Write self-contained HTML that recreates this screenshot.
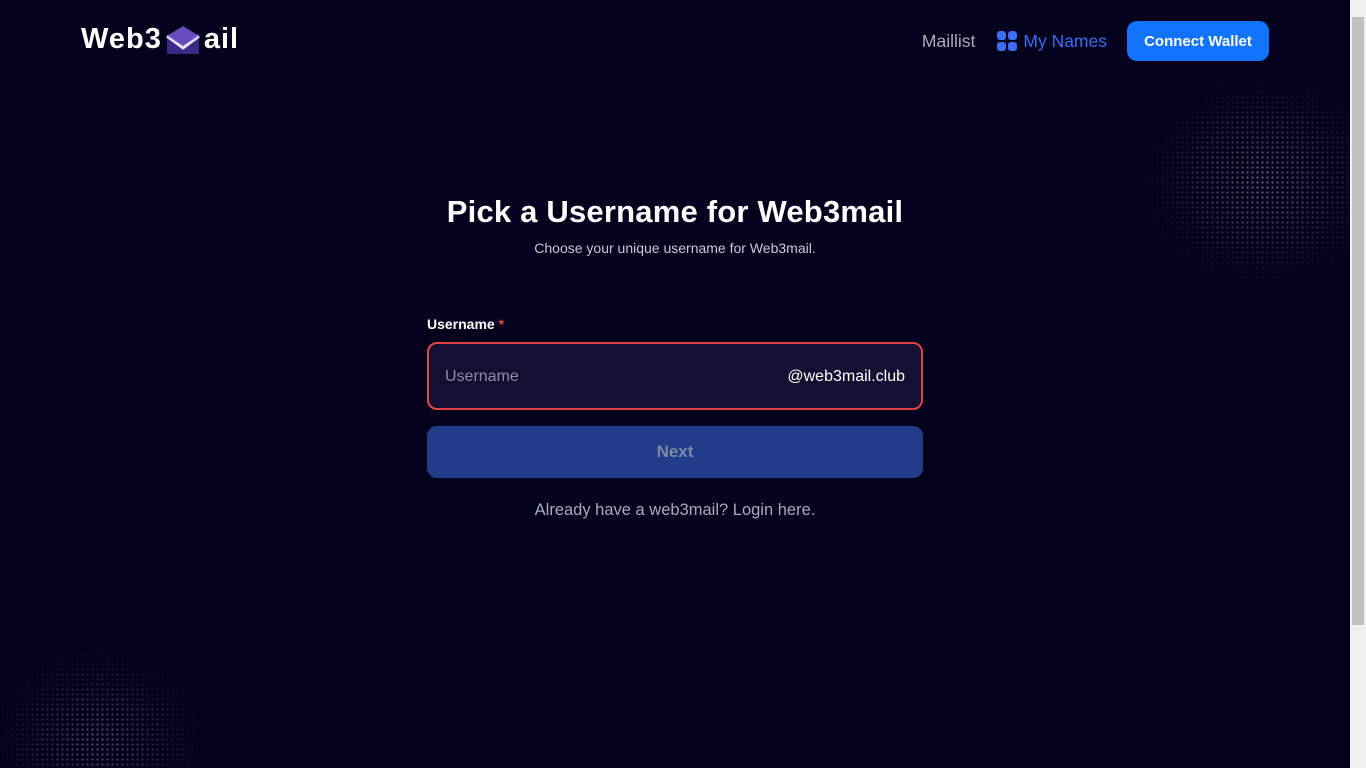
<!DOCTYPE html>
<html><head><meta charset="utf-8"><style>
*{margin:0;padding:0;box-sizing:border-box}
body{width:1366px;height:768px;background:#03011c;font-family:"Liberation Sans",sans-serif;overflow:hidden;position:relative;color:#fff}
.sb{position:absolute;right:0;top:0;width:16px;height:768px;background:#f1f1f1}
.sb i{position:absolute;left:2px;top:17px;width:12px;height:608px;background:#c1c1c1}
.dots1{position:absolute;left:1100px;top:80px;width:250px;height:225px;background-image:radial-gradient(circle,#8a8a9e 0.9px,transparent 1.3px);background-size:5px 5px;-webkit-mask-image:radial-gradient(ellipse 60% 60% at 65% 45%,rgba(0,0,0,.9),transparent 80%);opacity:.85}
.dots2{position:absolute;left:0;top:632px;width:245px;height:136px;background-image:radial-gradient(circle,#8a8a9e 0.9px,transparent 1.3px);background-size:5px 5px;-webkit-mask-image:radial-gradient(ellipse 55% 85% at 40% 80%,rgba(0,0,0,.85),transparent 80%);opacity:.75}
.logo{position:absolute;left:81px;top:23px;font-size:29px;font-weight:bold;letter-spacing:1px;display:flex;align-items:center}
.nav{position:absolute;top:21px;right:97px;display:flex;align-items:center;font-size:17.5px}
.ml{color:#a9abbe;margin-right:22px}
.mn{color:#3b6ef5;display:flex;align-items:center;margin-right:20px}
.g{display:grid;grid-template-columns:9px 9px;gap:2px;margin-right:6px}
.g i{width:9px;height:9px;background:#3b6ef5;border-radius:3px}
.cw{background:#1273ff;color:#fff;font-weight:bold;font-size:15px;width:142px;height:40px;border-radius:10px;display:flex;align-items:center;justify-content:center}
h1{position:absolute;left:0;width:1350px;top:194px;text-align:center;font-size:31px;letter-spacing:.2px;font-weight:bold}
.sub{position:absolute;left:0;width:1350px;top:240px;text-align:center;font-size:14px;color:#c9c9dd}
.lbl{position:absolute;left:427px;top:316px;font-size:14px;font-weight:bold}
.lbl span{color:#ef4444}
.inp{position:absolute;left:427px;top:342px;width:496px;height:68px;border:2px solid #e04448;border-radius:10px;background:#141032;display:flex;align-items:center;justify-content:space-between;padding:0 16px;font-size:16px;padding-top:2px}
.inp .p{color:#8d8ca4}
.next{position:absolute;left:427px;top:426px;width:496px;height:52px;border-radius:10px;background:#213d8a;color:#7c86a4;font-weight:bold;font-size:17px;display:flex;align-items:center;justify-content:center}
.al{position:absolute;left:0;width:1350px;top:501px;text-align:center;font-size:16.5px;color:#a7abc0}
</style></head><body>
<div class="dots1"></div><div class="dots2"></div>
<div class="logo">Web3<svg width="40" height="32" viewBox="0 0 36 32" style="margin:0 1px"><path d="M2 12 L18 2 L34 12 V30 H2Z" fill="#3a2a85"/><path d="M2 12 L18 24 L34 12" fill="none" stroke="#e8e4ff" stroke-width="3"/><path d="M2 12 L18 2 L34 12 L18 22Z" fill="#7b5bd9" opacity=".7"/></svg>ail</div>
<div class="nav"><span class="ml">Maillist</span><span class="mn"><span class="g"><i></i><i></i><i></i><i></i></span>My Names</span><span class="cw">Connect Wallet</span></div>
<h1>Pick a Username for Web3mail</h1>
<div class="sub">Choose your unique username for Web3mail.</div>
<div class="lbl">Username <span>*</span></div>
<div class="inp"><span class="p">Username</span><span>@web3mail.club</span></div>
<div class="next">Next</div>
<div class="al">Already have a web3mail? Login here.</div>
<div class="sb"><i></i></div>
</body></html>
